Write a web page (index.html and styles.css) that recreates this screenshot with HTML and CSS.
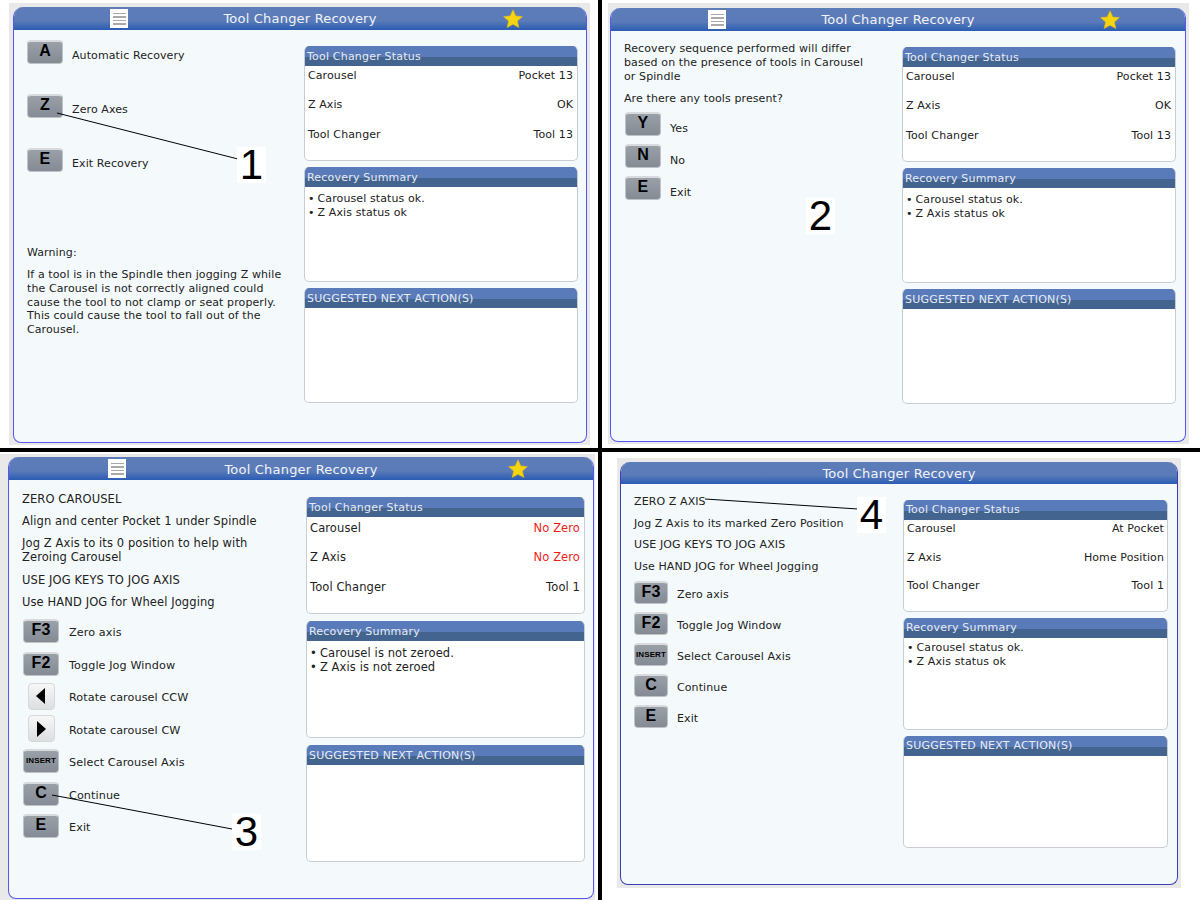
FILE: index.html

```html
<!DOCTYPE html>
<html>
<head>
<meta charset="utf-8">
<title>Tool Changer Recovery</title>
<link rel="stylesheet" href="styles.css">
</head>
<body>
<div class="sheet">

  <!-- 1 -->
  <div class="quad q1">
    <div class="frame">
      <div class="window">
        <div class="titlebar">
          <div class="bar-left"><span class="menu-icon"><i></i><i></i><i></i><i></i></span></div>
          <div class="bar-title">Tool Changer Recovery</div>
          <div class="bar-right"><svg class="star" viewBox="0 0 20 20"><path d="M10 .8l2.8 6.1 6.6.7-5 4.4 1.5 6.6L10 15.2l-5.9 3.4 1.5-6.6-5-4.4 6.6-.7z"/></svg></div>
        </div>
        <div class="body">
          <div class="left">
            <div class="key-row"><span class="key">A</span><span class="key-label">Automatic Recovery</span></div>
            <div class="key-row"><span class="key">Z</span><span class="key-label">Zero Axes</span></div>
            <div class="key-row"><span class="key">E</span><span class="key-label">Exit Recovery</span></div>
            <p class="warn-head">Warning:</p>
            <p class="warn-text">If a tool is in the Spindle then jogging Z while the Carousel is not correctly aligned could cause the tool to not clamp or seat properly. This could cause the tool to fall out of the Carousel.</p>
          </div>
          <div class="right">
            <div class="panel">
              <div class="panel-head">Tool Changer Status</div>
              <div class="stat"><span>Carousel</span><span>Pocket 13</span></div>
              <div class="stat"><span>Z Axis</span><span>OK</span></div>
              <div class="stat"><span>Tool Changer</span><span>Tool 13</span></div>
            </div>
            <div class="panel">
              <div class="panel-head">Recovery Summary</div>
              <ul class="notes"><li>Carousel status ok.</li><li>Z Axis status ok</li></ul>
            </div>
            <div class="panel">
              <div class="panel-head">SUGGESTED NEXT ACTION(S)</div>
            </div>
          </div>
        </div>
      </div>
    </div>
  </div>

  <!-- 2 -->
  <div class="quad q2">
    <div class="frame">
      <div class="window">
        <div class="titlebar">
          <div class="bar-left"><span class="menu-icon"><i></i><i></i><i></i><i></i></span></div>
          <div class="bar-title">Tool Changer Recovery</div>
          <div class="bar-right"><svg class="star" viewBox="0 0 20 20"><path d="M10 .8l2.8 6.1 6.6.7-5 4.4 1.5 6.6L10 15.2l-5.9 3.4 1.5-6.6-5-4.4 6.6-.7z"/></svg></div>
        </div>
        <div class="body">
          <div class="left">
            <p class="intro">Recovery sequence performed will differ based on the presence of tools in Carousel or Spindle</p>
            <p class="ask">Are there any tools present?</p>
            <div class="key-row"><span class="key">Y</span><span class="key-label">Yes</span></div>
            <div class="key-row"><span class="key">N</span><span class="key-label">No</span></div>
            <div class="key-row"><span class="key">E</span><span class="key-label">Exit</span></div>
          </div>
          <div class="right">
            <div class="panel">
              <div class="panel-head">Tool Changer Status</div>
              <div class="stat"><span>Carousel</span><span>Pocket 13</span></div>
              <div class="stat"><span>Z Axis</span><span>OK</span></div>
              <div class="stat"><span>Tool Changer</span><span>Tool 13</span></div>
            </div>
            <div class="panel">
              <div class="panel-head">Recovery Summary</div>
              <ul class="notes"><li>Carousel status ok.</li><li>Z Axis status ok</li></ul>
            </div>
            <div class="panel">
              <div class="panel-head">SUGGESTED NEXT ACTION(S)</div>
            </div>
          </div>
        </div>
      </div>
    </div>
  </div>

  <!-- 3 -->
  <div class="quad q3">
    <div class="frame">
      <div class="window">
        <div class="titlebar">
          <div class="bar-left"><span class="menu-icon"><i></i><i></i><i></i><i></i></span></div>
          <div class="bar-title">Tool Changer Recovery</div>
          <div class="bar-right"><svg class="star" viewBox="0 0 20 20"><path d="M10 .8l2.8 6.1 6.6.7-5 4.4 1.5 6.6L10 15.2l-5.9 3.4 1.5-6.6-5-4.4 6.6-.7z"/></svg></div>
        </div>
        <div class="body">
          <div class="left">
            <p class="line">ZERO CAROUSEL</p>
            <p class="line">Align and center Pocket 1 under Spindle</p>
            <p class="line">Jog Z Axis to its 0 position to help with<br>Zeroing Carousel</p>
            <p class="line">USE JOG KEYS TO JOG AXIS</p>
            <p class="line">Use HAND JOG for Wheel Jogging</p>
            <div class="keys">
              <div class="key-row"><span class="key">F3</span><span class="key-label">Zero axis</span></div>
              <div class="key-row"><span class="key">F2</span><span class="key-label">Toggle Jog Window</span></div>
              <div class="key-row"><span class="key-slot"><span class="arrow-key"><svg viewBox="0 0 12 18"><path d="M10 1v16L1 9z"/></svg></span></span><span class="key-label">Rotate carousel CCW</span></div>
              <div class="key-row"><span class="key-slot"><span class="arrow-key"><svg viewBox="0 0 12 18"><path d="M2 1v16l9-8z"/></svg></span></span><span class="key-label">Rotate carousel CW</span></div>
              <div class="key-row"><span class="key key-small">INSERT</span><span class="key-label">Select Carousel Axis</span></div>
              <div class="key-row"><span class="key">C</span><span class="key-label">Continue</span></div>
              <div class="key-row"><span class="key">E</span><span class="key-label">Exit</span></div>
            </div>
          </div>
          <div class="right">
            <div class="panel">
              <div class="panel-head">Tool Changer Status</div>
              <div class="stat"><span>Carousel</span><span class="bad">No Zero</span></div>
              <div class="stat"><span>Z Axis</span><span class="bad">No Zero</span></div>
              <div class="stat"><span>Tool Changer</span><span>Tool 1</span></div>
            </div>
            <div class="panel">
              <div class="panel-head">Recovery Summary</div>
              <ul class="notes"><li>Carousel is not zeroed.</li><li>Z Axis is not zeroed</li></ul>
            </div>
            <div class="panel">
              <div class="panel-head">SUGGESTED NEXT ACTION(S)</div>
            </div>
          </div>
        </div>
      </div>
    </div>
  </div>

  <!-- 4 -->
  <div class="quad q4">
    <div class="frame">
      <div class="window">
        <div class="titlebar">
          <div class="bar-left"></div>
          <div class="bar-title">Tool Changer Recovery</div>
          <div class="bar-right"></div>
        </div>
        <div class="body">
          <div class="left">
            <p class="line">ZERO Z AXIS</p>
            <p class="line">Jog Z Axis to its marked Zero Position</p>
            <p class="line">USE JOG KEYS TO JOG AXIS</p>
            <p class="line">Use HAND JOG for Wheel Jogging</p>
            <div class="keys">
              <div class="key-row"><span class="key">F3</span><span class="key-label">Zero axis</span></div>
              <div class="key-row"><span class="key">F2</span><span class="key-label">Toggle Jog Window</span></div>
              <div class="key-row"><span class="key key-small">INSERT</span><span class="key-label">Select Carousel Axis</span></div>
              <div class="key-row"><span class="key">C</span><span class="key-label">Continue</span></div>
              <div class="key-row"><span class="key">E</span><span class="key-label">Exit</span></div>
            </div>
          </div>
          <div class="right">
            <div class="panel">
              <div class="panel-head">Tool Changer Status</div>
              <div class="stat"><span>Carousel</span><span>At Pocket</span></div>
              <div class="stat"><span>Z Axis</span><span>Home Position</span></div>
              <div class="stat"><span>Tool Changer</span><span>Tool 1</span></div>
            </div>
            <div class="panel">
              <div class="panel-head">Recovery Summary</div>
              <ul class="notes"><li>Carousel status ok.</li><li>Z Axis status ok</li></ul>
            </div>
            <div class="panel">
              <div class="panel-head">SUGGESTED NEXT ACTION(S)</div>
            </div>
          </div>
        </div>
      </div>
    </div>
  </div>

  <!-- callouts drawn over the screenshots -->
  <svg class="leaders" viewBox="0 0 1200 900">
    <line x1="57" y1="113" x2="238" y2="159"/>
    <line x1="52" y1="795" x2="232" y2="829"/>
    <line x1="705" y1="499" x2="858" y2="509"/>
  </svg>
  <span class="callout c1">1</span>
  <span class="callout c2">2</span>
  <span class="callout c3">3</span>
  <span class="callout c4">4</span>
</div>
</body>
</html>
```

FILE: styles.css

```css
html, body {
	margin: 0;
	padding: 0;
	background: #fff;
}
body {
	font-family: "DejaVu Sans", sans-serif;
	font-size: 11px;
	letter-spacing: .1px;
	color: #222;
}
p {
	margin: 0;
}
.sheet {
	position: relative;
	width: 1200px;
	height: 900px;
	overflow: hidden;
	background: #000;
	display: grid;
	grid-template-columns: 598px 598px;
	grid-template-rows: 448px 448px;
	gap: 4px;
}
.quad {
	background: #fff;
	display: flex;
	box-sizing: border-box;
}
.frame {
	flex: 1;
	display: flex;
	box-sizing: border-box;
	background: #e9e9e9;
}
.window {
	flex: 1;
	display: flex;
	flex-direction: column;
	box-sizing: border-box;
	background: #f4fafb;
	border: 1px solid #5557ee;
	border-top: 0;
	border-radius: 10px 10px 8px 8px;
	overflow: hidden;
}

/* title bar */
.titlebar {
	display: grid;
	grid-template-columns: 1fr auto 1fr;
	align-items: center;
	height: 23px;
	margin: 0 -1px;
	background: linear-gradient(#5d7db9 0, #5a7bb8 60%, #2b5cb3 100%);
	color: #f0f4fa;
	font-size: 13px;
}
.bar-title {
	letter-spacing: .2px;
}
.bar-left {
	display: flex;
	padding-left: 97px;
}
.bar-right {
	display: flex;
	justify-content: flex-end;
	padding-right: 64px;
}
.menu-icon {
	width: 18px;
	height: 19px;
	background: #fff;
	display: flex;
	flex-direction: column;
	justify-content: center;
	align-items: center;
	gap: 2px;
}
.menu-icon i {
	width: 13px;
	height: 1.5px;
	background: #a9a9a9;
}
.star {
	width: 20px;
	height: 20px;
	fill: #f6d40e;
	stroke: #e2ba10;
	stroke-width: .6;
}

/* body */
.body {
	flex: 1;
	display: flex;
	min-height: 0;
}
.left {
	flex: 1;
	min-width: 0;
}
.right {
	display: flex;
	flex-direction: column;
}

/* side panels */
.panel {
	box-sizing: border-box;
	background: #fff;
	border: 1px solid #c9ccd3;
	border-top: 0;
	border-radius: 5px;
	overflow: hidden;
}
.panel-head {
	height: 20px;
	line-height: 21px;
	margin: 0 -1px;
	padding-left: 3px;
	color: #e6ecf5;
	background: linear-gradient(#5a7bb9 0, #5a7bb9 55%, #43648f 55%, #43648f 100%);
	font-size: 11px;
	letter-spacing: .2px;
}
.stat {
	display: flex;
	justify-content: space-between;
	height: 29.3px;
	padding: 3px 4px 0 3px;
	line-height: 14px;
	box-sizing: border-box;
}
.bad {
	color: #f01c1c;
}
.notes {
	list-style: none;
	margin: 0;
	padding: 5px 0 0 3px;
	line-height: 14px;
}
.notes li::before {
	content: "\2022";
	margin-right: 3px;
}

/* keys */
.key-row {
	display: flex;
	align-items: center;
}
.key {
	box-sizing: border-box;
	flex: none;
	width: 36px;
	height: 24px;
	border-radius: 4px;
	border: 1px solid #bfc2c6;
	border-top: 2px solid #d8dadd;
	background: linear-gradient(#9aa0a8, #858b94);
	color: #000;
	font-family: "Liberation Sans", sans-serif;
	font-weight: bold;
	font-size: 16px;
	line-height: 18px;
	text-align: center;
}
.key-small {
	font-size: 8px;
	line-height: 20px;
}
.key-slot {
	flex: none;
	width: 36px;
	display: flex;
	justify-content: center;
}
.arrow-key {
	box-sizing: border-box;
	width: 27px;
	height: 27px;
	border-radius: 4px;
	border: 1px solid #d5d7da;
	background: linear-gradient(#f7f7f7, #dcdee0);
	display: flex;
	align-items: center;
	justify-content: center;
}
.arrow-key svg {
	width: 12px;
	height: 18px;
	fill: #000;
}
.key-label {
	margin-left: 10px;
	white-space: nowrap;
}

/* quadrant 1 */
.q1 {
	padding: 3px 8px 3px 9px;
}
.q1 .frame {
	padding: 4px 3px 2px 4px;
}
.q1 .body {
	padding: 16px 8px 0 13px;
}
.q1 .left {
	margin-top: -6px;
}
.q1 .key-row {
	margin-bottom: 30px;
}
.q1 .key-label {
	margin-left: 9px;
	padding-top: 7px;
}
.q1 .warn-head {
	margin-top: 74px;
	line-height: 14px;
}
.q1 .warn-text {
	margin-top: 8px;
	line-height: 13.8px;
	width: 262px;
}
.q1 .right,
.q2 .right {
	width: 274px;
	gap: 6px;
}
.q1 .panel,
.q2 .panel {
	height: 115px;
}

/* quadrant 2 */
.q2 {
	padding: 3px 11px 4px 6px;
}
.q2 .frame {
	padding: 5px 3px 2px 2px;
}
.q2 .bar-left {
	padding-left: 98px;
}
.q2 .bar-right {
	padding-right: 66px;
}
.q2 .body {
	padding: 16px 9px 0 13px;
}
.q2 .left {
	margin-top: -5px;
}
.q2 .intro {
	line-height: 14px;
	width: 252px;
}
.q2 .ask {
	margin-top: 8px;
	line-height: 14px;
	margin-bottom: 6px;
}
.q2 .key-row {
	margin-bottom: 8px;
}
.q2 .key {
	margin-left: 1px;
}
.q2 .key-label {
	margin-left: 9px;
	padding-top: 8px;
}

/* quadrant 3 */
.q3 {
	padding: 2px 3px 0 0;
	font-size: 11.5px;
}
.q3 .frame {
	padding: 3px 1px 0 8px;
}
.q3 .window {
	margin-bottom: 1px;
}
.q3 .bar-left {
	padding-left: 100px;
}
.q3 .bar-right {
	padding-right: 66px;
}
.q3 .bar-title {
	padding-top: 1px;
}
.q3 .body {
	padding: 17px 8px 0 13px;
}
.q3 .left {
	margin-top: -5px;
}
.q3 .line {
	line-height: 14px;
	margin-bottom: 8.2px;
}
.q3 .keys {
	margin-top: 10.5px;
}
.q3 .key-row {
	height: 24px;
	margin-bottom: 8.5px;
}
.q3 .key {
	margin-left: 1px;
}
.q3 .key-slot {
	margin-left: 1px;
}
.q3 .key-label {
	padding-top: 3px;
	font-size: 11.2px;
}
.q3 .right {
	width: 279px;
	gap: 7.5px;
}
.q3 .panel {
	height: 116.5px;
}
.q3 .stat {
	padding-top: 4px;
}

/* quadrant 4 */
.q4 {
	padding: 6px 19px 12px 15px;
}
.q4 .frame {
	padding: 4px 3px 3px 3px;
}
.q4 .window {
	border-color: #3c3fb0;
}
.q4 .titlebar {
	height: 22px;
}
.q4 .body {
	padding: 16px 9px 0 13px;
}
.q4 .left {
	margin-top: -5px;
}
.q4 .line {
	line-height: 14px;
	margin-bottom: 7.5px;
}
.q4 .keys {
	margin-top: 4px;
}
.q4 .key {
	height: 23px;
	width: 34px;
	line-height: 17px;
}
.q4 .key-row {
	height: 23px;
	margin-bottom: 8px;
}
.q4 .key-small {
	line-height: 19px;
}
.q4 .key-label {
	margin-left: 9px;
	padding-top: 3px;
}
.q4 .right {
	width: 265px;
	gap: 6px;
}
.q4 .panel {
	height: 112px;
}
.q4 .panel-head {
	line-height: 19px;
}
.q4 .stat {
	height: 28.5px;
	padding: 2px 3px 0 3px;
}
.q4 .notes {
	padding-top: 3px;
}

/* callouts */
.leaders {
	position: absolute;
	left: 0;
	top: 0;
	width: 1200px;
	height: 900px;
	pointer-events: none;
}
.leaders line {
	stroke: #000;
	stroke-width: 1;
}
.callout {
	position: absolute;
	width: 29px;
	height: 36px;
	background: #fff;
	color: #000;
	font-family: "Liberation Sans", sans-serif;
	font-size: 42px;
	line-height: 36px;
	text-align: center;
}
.c1 { left: 237px; top: 147px; }
.c2 { left: 806px; top: 198px; }
.c3 { left: 232px; top: 814px; }
.c4 { left: 857px; top: 497px; }
```
